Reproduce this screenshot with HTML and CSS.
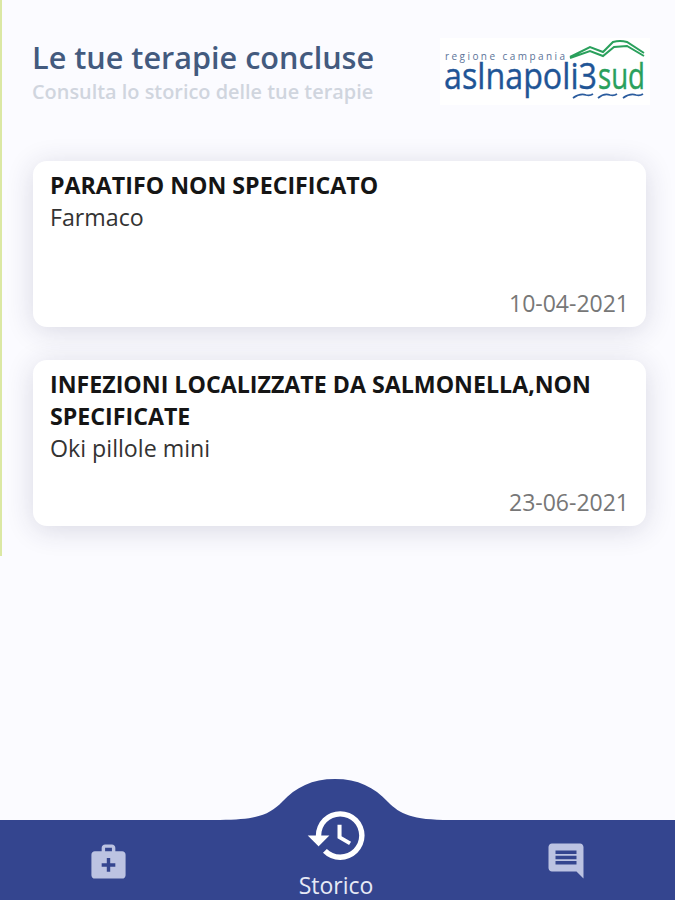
FILE: index.html
```html
<!DOCTYPE html>
<html lang="it">
<head>
<meta charset="utf-8">
<title>Storico terapie</title>
<link rel="stylesheet" href="styles.css">
</head>
<body>
<div class="page">
  <main class="content">
    <header class="header">
      <div class="heading">
        <h1 class="title">Le tue terapie concluse</h1>
        <p class="subtitle">Consulta lo storico delle tue terapie</p>
      </div>
      <svg class="logo" viewBox="440 38 210 67" width="210" height="67" role="img" aria-label="ASL Napoli 3 Sud">
        <rect x="440" y="38" width="210" height="67" fill="#ffffff"/>
        <text x="445" y="60" class="logo-region" textLength="120" lengthAdjust="spacing">regione campania</text>
        <text x="444" y="89" class="logo-name logo-blue" textLength="153" lengthAdjust="spacingAndGlyphs">aslnapoli3</text>
        <text x="598" y="89" class="logo-name logo-green" textLength="47" lengthAdjust="spacingAndGlyphs">sud</text>
        <path class="logo-mount" d="M570 57 L590 47 L603 52 L613 42 Q620 40 627 42 L644 53 M570 58 L590 51 L603 56 L614 47 L627 46 L644 56"/>
        <path class="logo-wave" d="M573 98 Q580 93 586 95 Q590 96 593 94 M598 98 Q604 93 610 95 Q614 96 617 94 M623 98 Q630 93 636 95 Q640 96 643 94"/>
      </svg>
    </header>
    <section class="list">
      <article class="card">
        <h2 class="card-title">PARATIFO NON SPECIFICATO</h2>
        <p class="card-drug">Farmaco</p>
        <time class="card-date">10-04-2021</time>
      </article>
      <article class="card">
        <h2 class="card-title">INFEZIONI LOCALIZZATE DA SALMONELLA,NON SPECIFICATE</h2>
        <p class="card-drug">Oki pillole mini</p>
        <time class="card-date">23-06-2021</time>
      </article>
    </section>
  </main>
  <nav class="nav">
    <svg class="hump" viewBox="0 0 230 44" width="230" height="44" aria-hidden="true">
      <path d="M0 42 C38 42 50 36 62 24 C76 9 92 1 115 1 C138 1 154 9 168 24 C180 36 192 42 230 42 L230 44 L0 44 Z"/>
    </svg>
    <div class="tab">
      <svg class="icon-side icon-brief" viewBox="0 0 24 24" aria-hidden="true"><path d="M20 6h-4V4c0-1.1-.9-2-2-2h-4c-1.1 0-2 .9-2 2v2H4c-1.1 0-2 .9-2 2v12c0 1.1.9 2 2 2h16c1.1 0 2-.9 2-2V8c0-1.1-.9-2-2-2zM10 4h4v2h-4V4zm6 11h-3v3h-2v-3H8v-2h3v-3h2v3h3v2z"/></svg>
    </div>
    <div class="tab tab-active">
      <svg class="icon-history" viewBox="0 0 24 24" aria-hidden="true"><path d="M13 3a9 9 0 0 0-9 9H1l3.89 3.89.07.14L9 12H6c0-3.87 3.13-7 7-7s7 3.13 7 7-3.13 7-7 7c-1.93 0-3.68-.79-4.94-2.06l-1.42 1.42A8.954 8.954 0 0 0 13 21a9 9 0 0 0 0-18zm-1 5v5l4.28 2.54.72-1.21-3.5-2.08V8H12z"/></svg>
      <span class="tab-label">Storico</span>
    </div>
    <div class="tab">
      <svg class="icon-side icon-chat" viewBox="0 0 24 24" aria-hidden="true"><path d="M21.99 4c0-1.1-.89-2-1.99-2H4c-1.1 0-2 .9-2 2v12c0 1.1.9 2 2 2h14l4 4-.01-18zM18 14H6v-2h12v2zm0-3H6V9h12v2zm0-3H6V6h12v2z"/></svg>
    </div>
  </nav>
</div>
</body>
</html>
```
FILE: styles.css
```css
* { box-sizing: border-box; }
html, body { margin: 0; padding: 0; }
body {
  background: #fbfbff;
  font-family: "Open Sans", "Liberation Sans", sans-serif;
  overflow: hidden;
}
.page {
  width: 675px;
  height: 900px;
  display: flex;
  flex-direction: column;
  justify-content: space-between;
}
.content {
  height: 556px;
  border-left: 2px solid #dbe8a4;
  padding: 37px 29px 0 31px;
}
.header {
  display: flex;
  justify-content: space-between;
  align-items: flex-start;
  height: 124px;
  margin-right: -4px;
}
.heading { margin-left: -1px; }
.title {
  margin: 0;
  font-size: 30.6px;
  line-height: 40px;
  font-weight: 600;
  color: #435a7e;
}
.subtitle {
  margin: 1px 0 0;
  font-size: 19.9px;
  line-height: 27px;
  font-weight: 600;
  color: #d0d5de;
}
.logo { display: block; margin-top: 1px; }
.logo-region {
  font-family: "Open Sans", sans-serif;
  font-size: 10px;
  fill: #5b7398;
}
.logo-name {
  font-family: "Open Sans", sans-serif;
  font-size: 36px;
}
.logo-blue { fill: #1f5596; stroke: #1f5596; stroke-width: 0.4; }
.logo-green { fill: #2aa05c; stroke: #2aa05c; stroke-width: 0.4; }
.logo-mount { fill: none; stroke: #2aa05c; stroke-width: 2; }
.logo-wave { fill: none; stroke: #2b5c9e; stroke-width: 1.8; }
.list {
  display: flex;
  flex-direction: column;
  gap: 33px;
}
.card {
  height: 166px;
  background: #ffffff;
  border-radius: 14px;
  box-shadow: 0 4px 28px rgba(40, 40, 80, 0.16);
  padding: 8px 17px 8px 17px;
  display: flex;
  flex-direction: column;
}
.card-title {
  margin: 0;
  font-size: 23.2px;
  line-height: 32px;
  font-weight: 700;
  color: #151515;
}
.card-drug {
  margin: 0;
  font-size: 23.2px;
  line-height: 32px;
  font-weight: 400;
  color: #333333;
}
.card-date {
  margin-top: auto;
  align-self: flex-end;
  font-size: 23px;
  line-height: 32px;
  color: #777777;
}
.nav {
  position: relative;
  height: 80px;
  background: #34458f;
  display: grid;
  grid-template-columns: 1fr 1fr 1fr;
  justify-items: center;
}
.hump {
  position: absolute;
  left: 220px;
  top: -42px;
  fill: #34458f;
}
.tab {
  position: relative;
  display: flex;
  flex-direction: column;
  align-items: center;
  width: 100%;
}
.tab-active { padding-right: 3px; }
.icon-side { display: block; fill: #bcc3e2; }
.icon-brief { width: 41px; height: 41px; margin: 21px 0 0 -9px; }
.icon-chat { width: 42px; height: 42px; margin: 20px 0 0 7px; }
.icon-history { display: block; width: 65px; height: 65px; margin: -17px 0 0 2px; fill: #ffffff; }
.tab-label {
  font-size: 23px;
  line-height: 28px;
  color: #e6e9f5;
  margin-top: 3px;
}
```
